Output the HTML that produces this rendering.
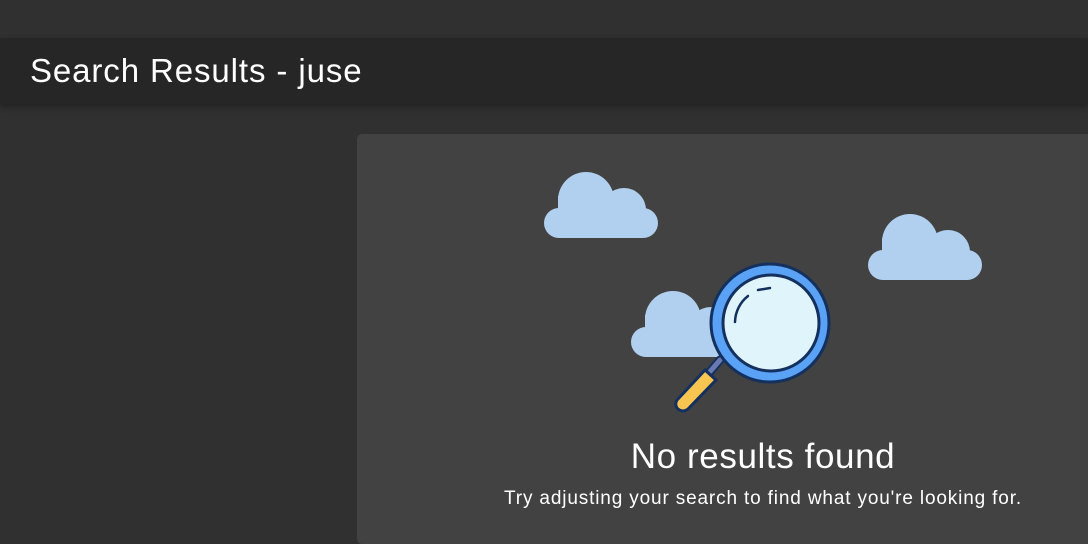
<!DOCTYPE html>
<html><head><style>
body{margin:0;width:1088px;height:538px;background:#303030;font-family:"Liberation Sans",sans-serif;overflow:hidden;position:relative}
.hdr{position:absolute;left:0;top:38px;width:1088px;height:66px;background:#262626;box-shadow:0 3px 6px rgba(0,0,0,.3)}
.hdr span{position:absolute;left:30px;top:14px;font-size:33px;color:#fff;letter-spacing:0.9px}
.card{position:absolute;left:357px;top:134px;width:740px;height:410px;background:#424242;border-radius:5px}
.t1{position:absolute;left:357px;width:812px;top:437px;text-align:center;font-size:35px;color:#fff;letter-spacing:0.6px}
.t2{position:absolute;left:357px;width:812px;top:488px;text-align:center;font-size:19px;color:#fff;letter-spacing:0.85px}
</style></head><body>
<div class="hdr"><span>Search Results - juse</span></div>
<div class="card"></div>
<svg style="position:absolute;left:0;top:0" width="1088" height="538">
<defs><g id="cl"><circle cx="42" cy="28" r="28"/><circle cx="80" cy="38" r="22"/><rect x="0" y="36" width="114" height="30" rx="15"/><rect x="14" y="24" width="80" height="40"/></g></defs>
<g fill="#b1cfee">
<use href="#cl" x="544" y="172"/>
<use href="#cl" x="868" y="214"/>
<use href="#cl" x="631" y="291"/>
</g>
<g stroke="#14305e" stroke-width="3" stroke-linecap="round">
<line x1="720" y1="360" x2="708" y2="374" stroke="#14305e" stroke-width="9"/>
<line x1="720" y1="360" x2="708" y2="374" stroke="#6a79b0" stroke-width="5"/>
<path d="M705 370 L716 380 L688 409 Q683 413 678 409 L677 408 Q674 403 678 399 Z" fill="#f8c550"/>
<circle cx="770" cy="323" r="59" fill="#5aa2f5"/>
<circle cx="771" cy="323" r="48" fill="#e0f4fb"/>
<path d="M735 322 A 34 34 0 0 1 748 296" fill="none" stroke-width="2.5"/>
<path d="M758 290 L770 288" fill="none" stroke-width="2.5"/>
</g>
</svg>
<div class="t1">No results found</div>
<div class="t2">Try adjusting your search to find what you're looking for.</div>
</body></html>
